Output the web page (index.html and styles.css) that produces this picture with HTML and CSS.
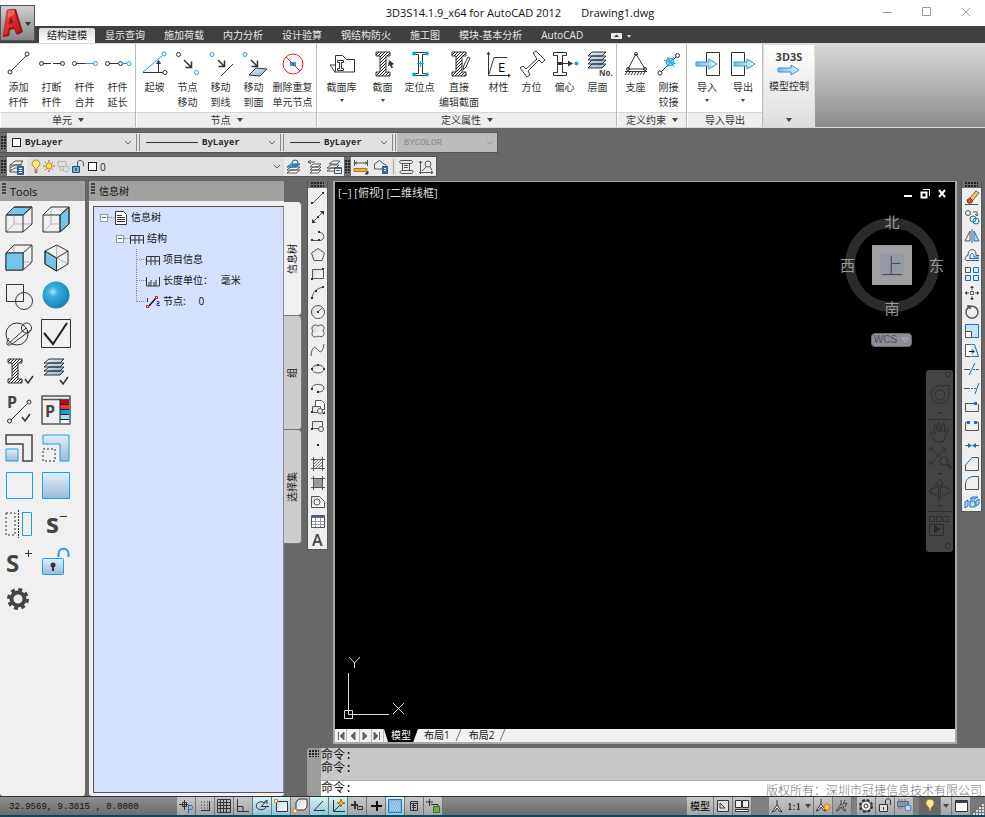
FILE: index.html
```html
<!DOCTYPE html>
<html lang="zh-CN">
<head>
<meta charset="utf-8">
<title>3D3S14.1.9_x64 for AutoCAD 2012</title>
<link rel="stylesheet" href="styles.css">
</head>
<body>
<svg class="defs" width="0" height="0" aria-hidden="true">
  <defs>
    <linearGradient id="steel" x1="0" y1="0" x2="1" y2="1"><stop offset="0" stop-color="#e4f0fb"/><stop offset="1" stop-color="#8fb0d8"/></linearGradient>
    <linearGradient id="fade" x1="0" y1="0" x2="0" y2="1"><stop offset="0" stop-color="#e2effa"/><stop offset="1" stop-color="#9db9dc"/></linearGradient>
    <linearGradient id="arrowfill" x1="0" y1="0" x2="1" y2="0"><stop offset="0" stop-color="#8fb0d8"/><stop offset="1" stop-color="#e8f6ff"/></linearGradient>
    <linearGradient id="grey" x1="0" y1="0" x2="1" y2="1"><stop offset="0" stop-color="#d4d8de"/><stop offset="1" stop-color="#ffffff"/></linearGradient>
    <linearGradient id="red" x1="0" y1="0" x2="1" y2="1"><stop offset="0" stop-color="#f0504c"/><stop offset="1" stop-color="#b80c12"/></linearGradient>
    <radialGradient id="ball" cx=".38" cy=".38" r=".6"><stop offset="0" stop-color="#b6e2fa"/><stop offset=".3" stop-color="#3aaee0"/><stop offset="1" stop-color="#1a86ba"/></radialGradient>
    <pattern id="hatch" width="3" height="3" patternUnits="userSpaceOnUse"><path d="M0 3L3 0" stroke="#222" stroke-width="1"/></pattern>
    <path id="beam" d="M0 0h14v4h-4v16h4v4H0v-4h4V4H0z"/>
    <path id="arrow" d="M0 3h13V0l8 5-8 5V7H0z"/>
    <path id="chev" d="M1 2l3 3 3-3"/>
    <g id="cube"><path class="pale" d="M10 2v17h18M10 19l-8 8"/><path d="M2 10h17v17H2zM2 10l8-8h18v17l-9 8M19 10l9-8"/></g>
  </defs>
</svg>

<header class="top">
  <div class="titlebar">
    <h1 class="title"><span>3D3S14.1.9_x64 for AutoCAD 2012</span><span>Drawing1.dwg</span></h1>
    <button class="win" aria-label="最小化"><svg width="10" height="10"><path d="M0 5.500h9"/></svg></button>
    <button class="win" aria-label="最大化"><svg width="10" height="10"><path d="M.5.500h8v8h-8z"/></svg></button>
    <button class="win" aria-label="关闭"><svg width="10" height="10"><path d="M1 1l8 8M9 1L1 9"/></svg></button>
  </div>
  <nav class="tabs">
    <a class="tab on" href="#">结构建模</a><a class="tab" href="#">显示查询</a><a class="tab" href="#">施加荷载</a><a class="tab" href="#">内力分析</a><a class="tab" href="#">设计验算</a><a class="tab" href="#">钢结构防火</a><a class="tab" href="#">施工图</a><a class="tab" href="#">模块-基本分析</a><a class="tab" href="#">AutoCAD</a>
    <button class="fold" aria-label="折叠功能区"><svg width="22" height="8"><rect x="1" y="1" width="11" height="6" rx="1" fill="#eee" stroke="none"/><path d="M4 5l2.500-2.500L9 5z" fill="#333" stroke="none"/><path d="M17 3h4l-2 3z" fill="#ddd" stroke="none"/></svg></button>
  </nav>
  <button class="app" aria-label="应用程序菜单"><svg width="32" height="33"><path d="M7 3l8-1 7 23-6 3-3-6-4 1-1 6-6 1z" fill="#8d1216" stroke="none"/><path fill-rule="evenodd" d="M6 3l7-1 7 22-5 2-2-6-5 1-1 6-5 2zM10 9l-2 8 4-1z" fill="url(#red)" stroke="#a81c20" stroke-width=".5"/><path d="M7 4l6-1 1 4-7 4z" fill="#ff8078" opacity=".6" stroke="none"/><path d="M24 15h6l-3 4z" fill="#333" stroke="none"/></svg></button>
</header>

<section class="ribbon">
  <div class="panel">
    <div class="tools-row">
      <button class="big"><svg width="28" height="28"><path d="M6 21L21 6"/><circle cx="5" cy="22" r="2"/><circle cx="22" cy="4" r="2"/></svg><span>添加<br>杆件</span></button>
      <button class="big"><svg width="28" height="28"><path d="M5 13.500h8M15 13.500h8"/><circle cx="3.500" cy="13.500" r="2"/><circle cx="24.500" cy="13.500" r="2"/></svg><span>打断<br>杆件</span></button>
      <button class="big"><svg width="28" height="28"><path d="M5 13.500h9"/><circle cx="3.500" cy="13.500" r="2"/><g class="b"><path d="M14 13.500h9"/><circle cx="24.500" cy="13.500" r="2"/></g></svg><span>杆件<br>合并</span></button>
      <button class="big"><svg width="28" height="28"><path d="M5 13.500h9"/><circle cx="3.500" cy="13.500" r="2"/><circle cx="16.500" cy="13.500" r="2"/><g class="b"><path d="M18 13.500h5"/><circle cx="25" cy="13.500" r="2"/></g></svg><span>杆件<br>延长</span></button>
    </div>
    <h2 class="cap">单元 <i class="tri"></i></h2>
  </div>
  <div class="panel">
    <div class="tools-row">
      <button class="big"><svg width="28" height="28"><path d="M2 22.500h20M17.500 22V11M15.500 13.500l2-3 2 3z"/><circle cx="24" cy="22.500" r="2"/><g class="b"><path d="M2 22L21 6"/><circle cx="23" cy="4" r="2"/></g></svg><span>起坡</span></button>
      <button class="big"><svg width="28" height="28"><circle cx="4.500" cy="4.500" r="2"/><path d="M10 10l7 7M17.500 11.500v6h-6" stroke-width="1.500"/><circle class="b" cx="22.500" cy="22.500" r="2"/></svg><span>节点<br>移动</span></button>
      <button class="big"><svg width="28" height="28"><circle class="b" cx="5" cy="4.500" r="2"/><path d="M11 10l6 6M17.500 10.500v6h-6" stroke-width="1.500"/><path d="M14 26l12-12"/></svg><span>移动<br>到线</span></button>
      <button class="big"><svg width="28" height="28"><circle class="b" cx="5" cy="4.500" r="2"/><path d="M11 10l6 6M17.500 10.500v6h-6" stroke-width="1.500"/><path d="M9 25l7-7 11 1-7 7z" fill="url(#steel)"/></svg><span>移动<br>到面</span></button>
      <button class="big w44"><svg width="28" height="28"><path d="M11 12h6v4h-6z" fill="#1ba1e2" stroke="none"/><circle cx="14" cy="14" r="10" stroke="#e8202c"/><path d="M7 7l14 14" stroke="#e8202c"/></svg><span>删除重复<br>单元节点</span></button>
    </div>
    <h2 class="cap">节点 <i class="tri"></i></h2>
  </div>
  <div class="panel wide">
    <div class="tools-row">
      <button class="big w41"><svg width="28" height="28"><path d="M2 15h5M2 15l5 7M7.500 21V5.500h7l4 4h8v12.500h-20z"/><path d="M9.500 10.500h6v2h-2v6h2v2h-6v-2h2v-6h-2z"/></svg><span>截面库</span><i class="tri small"></i></button>
      <button class="big w41"><svg width="28" height="28"><use href="#beam" x="7" y="2" fill="url(#hatch)"/><path class="k" d="M20 10l5 4-2 1 1 3-2 0-1-3-2 1z"/></svg><span>截面</span><i class="tri small"></i></button>
      <button class="big"><svg width="28" height="28"><path d="M7.500 2.500h14v2h-5v19h5v2h-14v-2h5v-19h-5z"/><path class="b" d="M11 13.500h7M14.500 11v6"/><g fill="#1ba1e2" stroke="none"><circle cx="8" cy="3.500" r="2"/><circle cx="21" cy="3.500" r="2"/><circle cx="8" cy="24.500" r="2"/><circle cx="21" cy="24.500" r="2"/></g></svg><span>定位点</span></button>
      <button class="big w46"><svg width="28" height="28"><use href="#beam" x="7" y="2" fill="url(#hatch)"/><path d="M18 20l1-5 4-8 2 1-4 9z" fill="#fff"/></svg><span>直接<br>编辑截面</span></button>
      <button class="big"><svg width="28" height="28"><path d="M3.500 3v22.500H25M4 24l5-16.500h13"/><path class="k" d="M3.500 1.500l2 3h-4zM26 25.500l-3-2v4z"/><text x="13" y="22" class="t13">E</text></svg><span>材性</span></button>
      <button class="big"><svg width="28" height="28"><path d="M15 3l3-2 9 9-3 3-3-3L10 21l2 4-3 2-7-9 3-2 3 3L19 9z"/></svg><span>方位</span></button>
      <button class="big"><svg width="28" height="28"><path d="M2.500 2.500h13v3h-4v17h4v3h-13v-3h4v-17h-4zM7 13.500h13"/><path class="k" d="M22 13.500l-5-3v6z"/><circle cx="25.500" cy="13.500" r="2" fill="#1ba1e2" stroke="none"/><path class="k" d="M7 12h4v3H7z"/></svg><span>偏心</span></button>
      <button class="big"><svg width="28" height="28"><g fill="url(#steel)"><path d="M4 18l4-4h14l-4 4zM4 14l4-4h14l-4 4zM4 10l4-4h14l-4 4zM4 6l4-4h14l-4 4z"/></g><text x="15" y="26" class="t8">No.</text></svg><span>层面</span></button>
    </div>
    <h2 class="cap">定义属性 <i class="tri"></i></h2>
  </div>
  <div class="panel">
    <div class="tools-row">
      <button class="big"><svg width="28" height="28"><path d="M14 4L6 19h17z"/><circle cx="14" cy="4" r="1.500"/><circle cx="6" cy="19" r="1.500"/><circle cx="23" cy="19" r="1.500"/><path d="M3 21.500h22M5 22l-2 3M8 22l-2 3M11 22l-2 3M14 22l-2 3M17 22l-2 3M20 22l-2 3M23 22l-2 3"/></svg><span>支座</span></button>
      <button class="big"><svg width="28" height="28"><path d="M6 22L21 7"/><circle cx="5" cy="23" r="2"/><circle cx="22.500" cy="5.500" r="2"/><circle cx="15" cy="12" r="4" fill="#8ed0f4" class="b"/><path class="b" d="M9 10l12 4M12 7l7 10M19 7l-7 10"/></svg><span>刚接<br>铰接</span></button>
    </div>
    <h2 class="cap">定义约束 <i class="tri"></i></h2>
  </div>
  <div class="panel">
    <div class="tools-row">
      <button class="big w37"><svg width="28" height="28"><path d="M13.500 2.500h13v23h-13z"/><use href="#arrow" x="3" y="9" class="b" fill="url(#arrowfill)"/></svg><span>导入</span><i class="tri small"></i></button>
      <button class="big w37"><svg width="28" height="28"><path d="M2.500 2.500h13v23h-13z"/><use href="#arrow" x="5" y="9" class="b" fill="url(#arrowfill)"/></svg><span>导出</span><i class="tri small"></i></button>
    </div>
    <h2 class="cap">导入导出</h2>
  </div>
  <button class="panel model"><b>3D3S</b><svg width="24" height="12"><use href="#arrow" x="1" y="1" class="b" fill="url(#arrowfill)"/></svg><span>模型控制</span><i class="tri"></i></button>
</section>

<div class="bar">
  <i class="grip"></i>
  <div class="combo c1"><i class="swatch"></i><select class="mono" aria-label="颜色"><option>ByLayer</option></select><svg class="chev" width="8" height="8"><use href="#chev"/></svg></div>
  <i class="split"></i>
  <div class="combo c2"><i class="rule"></i><select class="mono" aria-label="线型"><option>ByLayer</option></select><svg class="chev" width="8" height="8"><use href="#chev"/></svg></div>
  <i class="split"></i>
  <div class="combo c3"><i class="rule short"></i><select class="mono" aria-label="线宽"><option>ByLayer</option></select><svg class="chev" width="8" height="8"><use href="#chev"/></svg></div>
  <i class="split"></i>
  <div class="combo c4"><select class="mono" aria-label="打印样式" disabled><option>BYCOLOR</option></select><svg class="chev" width="8" height="8"><use href="#chev"/></svg></div>
</div>
<div class="bar">
  <i class="grip"></i>
  <button class="ic" aria-label="图层特性"><svg width="16" height="16"><path d="M1 12l5-3h5M1 9l5-3h7M1 6l5-4h8l-3 4H1v7h7" /><path d="M8.500 7.500h6v8h-6z" fill="#3f6fa8" stroke="#35557c"/><path d="M10 9.500h3M10 11.500h3M10 13.500h3" stroke="#fff"/></svg></button>
  <div class="combo c5">
    <svg width="56" height="16"><path d="M6 9C0 4 5 1 7 1s7 3 1 8v2H6z" fill="#ffe97a" stroke="#b08a20"/><path d="M5.500 12h3M6 13.500h2" stroke="#555"/><circle cx="20" cy="7" r="3" fill="#ffe14d" stroke="#c08a20"/><path d="M20 1v2M20 11v2M14 7h2M24 7h2M16 3l1 1M24 3l-1 1M16 11l1-1M24 11l-1-1" stroke="#8c6a20"/><path d="M29 2.500h8v5h-8zM31 7v4h4" stroke="#b5b5b5"/><circle cx="37" cy="10" r="3" stroke="#b5b5b5" fill="#ddd"/><path d="M43.500 7.500h7v6h-7z" fill="#6fb3dc" stroke="#234c68"/><path d="M48.500 7V4c0-4 6-3 6 1v2" stroke="#235f86"/><path d="M47 9v3" stroke="#123"/></svg>
    <i class="swatch"></i><select class="plain" aria-label="图层"><option>0</option></select><svg class="chev" width="8" height="8"><use href="#chev"/></svg>
  </div>
  <button class="ic" aria-label="置为当前"><svg width="16" height="16"><g fill="#fff"><path d="M1 14l4-3h9l-4 3zM1 11l4-3h9l-4 3z"/></g><path d="M1 8l4-3h9l-4 3z" fill="#57a9dc" stroke="#1f6c9e"/><circle cx="9" cy="4" r="3" stroke="#1f6c9e"/></svg></button>
  <button class="ic" aria-label="上一个图层"><svg width="16" height="16"><g fill="#fff"><path d="M4 14l3-3h8l-3 3zM4 11l3-3h8l-3 3zM4 8l3-3h8l-3 3z"/></g><path d="M9 3H2M5 1L2 3l3 2"/></svg></button>
  <button class="ic" aria-label="图层状态"><svg width="16" height="16"><g fill="#fff"><path d="M1 12l4-3h8l-3 3zM1 9l4-3h8l-3 3zM3 5l4-3h7l-3 3z"/></g><path d="M8.500 8.500h7v6h-7z" fill="#dfe8f3"/><path d="M9 9.500h6M10 11.500h4" stroke="#3f6fa8"/></svg></button>
  <i class="grip"></i>
  <button class="ic" aria-label="测量"><svg width="16" height="16"><path d="M1.500 1v6M14.500 1v6M2 4h12M4 2.500L2 4l2 1.500M12 2.500L14 4l-2 1.500"/><path d="M1 9.500h13v3H1z" fill="#f0b323" stroke="#b07c1c"/><path d="M15 12v3h-3z" fill="#000"/></svg></button>
  <button class="ic" aria-label="面域"><svg width="16" height="16"><path d="M1.500 10V5l5-3.500L11 5l2 1v3M2 10h7" fill="#eee"/><path d="M9.500 7.500h5v7h-5z" fill="#3f6fa8" stroke="#35557c"/><path d="M11 9.500h2M11 11.500h2" stroke="#fff"/></svg></button>
  <i class="line"></i>
  <button class="ic" aria-label="列表"><svg width="16" height="16"><path d="M3 1.500h10c2 0 2 3 0 3H4c-3 0-3-3-1-3zM4.500 5v7M11.500 5v6M6 6.500h4M6 8.500h4M4 11.500h10c2 0 1 3-1 3H4c-3 0-2-3 0-3z"/></svg></button>
  <button class="ic" aria-label="定位点"><svg width="16" height="16"><path d="M2.500 15V2M1 4l1.500-2L4 4M1 13.500h14M13 12l2 1.500L13 15M4 12l5-5"/><circle cx="10" cy="5" r="3"/><path d="M12 8l2 3"/></svg></button>
</div>

<main class="work">
  <aside class="dock toolbox">
    <h2 class="dock-head"><i class="dots"></i>Tools</h2>
    <div class="grid">
      <button aria-label="俯视"><svg width="30" height="30"><path d="M2 10l8-8h18l-9 8z" fill="#6fc7f0"/><use href="#cube"/></svg></button>
      <button aria-label="右视"><svg width="30" height="30"><path d="M19 10l9-8v17l-9 8z" fill="#6fc7f0"/><use href="#cube"/></svg></button>
      <button aria-label="前视"><svg width="30" height="30"><use href="#cube"/><path d="M2 10h17v17H2z" fill="#6fc7f0"/></svg></button>
      <button aria-label="轴测"><svg width="30" height="30"><path d="M4 8l11.500 7v13L4 21z" fill="#6fc7f0"/><path class="pale" d="M4 21l11.500-6L27 21M15.500 2v13"/><path d="M15.500 2L27 8v13l-11.500 7L4 21V8zM4 8l11.500 7L27 8M15.500 15v13"/></svg></button>
      <button aria-label="相交"><svg width="30" height="30"><path d="M2.500 3.500h17v17h-17z"/><circle cx="20" cy="20" r="8.500"/></svg></button>
      <button aria-label="渲染"><svg width="30" height="30"><circle cx="15" cy="14" r="13.500" fill="url(#ball)" stroke="none"/></svg></button>
      <button aria-label="旋转"><svg width="30" height="30"><circle cx="13" cy="15" r="11"/><circle cx="22.500" cy="9" r="5"/><path d="M3 26L22 9M5 19c-4 5-2 9 3 6L27 11"/></svg></button>
      <button aria-label="确认"><svg width="30" height="30"><path d="M.5.500h29v28H.5z"/><path d="M3 14l9 11L26 4" stroke="#222" stroke-width="2"/></svg></button>
      <button aria-label="截面显示"><svg width="30" height="30"><use href="#beam" x="4" y="2" fill="url(#hatch)"/><path d="M21 22l3 4 5-7" stroke-width="1.500"/></svg></button>
      <button aria-label="层面显示"><svg width="30" height="30"><g fill="url(#steel)"><path d="M3 18l5-4h15l-4 4zM3 14l5-4h15l-4 4zM3 10l5-4h15l-4 4zM3 6l5-4h15l-4 4z"/></g><path d="M19 23l3 4 5-7" stroke-width="1.500"/></svg></button>
      <button aria-label="杆件属性"><svg width="30" height="30"><text x="3" y="13" class="t16">P</text><path d="M7 25L24 8"/><circle cx="5.500" cy="26" r="2"/><circle cx="25" cy="7" r="2"/><path d="M18 22l3 4 5-7" stroke-width="1.500"/></svg></button>
      <button aria-label="属性颜色"><svg width="30" height="30"><path d="M1 1h28v28H1zM1 4.500h28" stroke="#555" stroke-width="1.500"/><g stroke="none"><path d="M19 5h9v4h-9z" fill="#c2001a"/><path d="M19 10h9v4h-9z" fill="#ef3434"/><path d="M19 15h9v4h-9z" fill="#12a0e4"/><path d="M19 20h9v4h-9z" fill="#a6dcf6"/><path d="M19 25h9v3h-9z" fill="#fff"/></g><path d="M19 4v24M19 9.500h9M19 14.500h9M19 19.500h9M19 24.500h9" stroke="#222"/><text x="4" y="22" class="t16">P</text></svg></button>
      <button aria-label="内部"><svg width="30" height="30"><path d="M2 2h26v26h-9V11H2z" stroke="#444" stroke-width="1.500"/><path class="b" d="M2 16h12v12H2z" fill="url(#fade)"/></svg></button>
      <button aria-label="外部"><svg width="30" height="30"><path class="b" d="M2 2h26v26h-9V11H2z" fill="url(#fade)"/><path d="M2 16h12v12H2z" stroke-dasharray="2 2"/></svg></button>
      <button aria-label="空框"><svg width="30" height="30"><path class="b" d="M2.500 1.500h26v26h-26z"/></svg></button>
      <button aria-label="实框"><svg width="30" height="30"><path class="b" d="M1.500 1.500h27v26h-27z" fill="url(#fade)"/></svg></button>
      <button aria-label="镜像"><svg width="30" height="30"><path d="M2 4h9v22H2z" stroke-dasharray="2 2"/><path d="M14.500 1v28" stroke-dasharray="2 1"/><path class="b" d="M18.500 3.500h9v23h-9z"/></svg></button>
      <button aria-label="减选"><svg width="30" height="30"><text x="5" y="24" class="t26">s</text><path d="M19 7.500h7"/></svg></button>
      <button aria-label="加选"><svg width="30" height="30"><text x="2" y="25" class="t24">S</text><path d="M21 6.500h7M24.500 3v7"/></svg></button>
      <button aria-label="解锁"><svg width="30" height="30"><rect class="b" x="1.500" y="11.500" width="21" height="16" rx="1" fill="url(#fade)"/><path class="b" d="M17.500 10V7c0-7 10-7 10 0v3" stroke-width="2"/><circle cx="12" cy="18" r="2.500" fill="#333" stroke="none"/><path d="M12 19v5" stroke="#333" stroke-width="2"/></svg></button>
      <button aria-label="设置"><svg width="30" height="30"><circle cx="14" cy="14" r="6.500" stroke="#444" stroke-width="4"/><circle cx="14" cy="14" r="9.500" stroke="#444" stroke-width="3" stroke-dasharray="4 3.460"/></svg></button>
    </div>
  </aside>

  <aside class="info">
    <div class="dock">
      <h2 class="dock-head"><i class="dots"></i>信息树</h2>
      <ul class="tree">
        <li><i class="pm"></i><i class="dash"></i><svg width="14" height="16"><path d="M1.500 1.500h8l3 3v10h-11z" fill="#fff"/><path d="M3 5.500h5M3 7.500h8M3 9.500h8M3 11.500h8"/></svg><span>信息树</span></li>
        <li class="l2"><i class="pm"></i><i class="dash"></i><svg width="14" height="16"><path d="M.5 13V4.500h13V13M5 4v9M9 4v9M1 9h12"/></svg><span>结构</span></li>
        <li class="l3"><svg class="twig" width="10" height="21"><path d="M.5 0v21M1 10.500h9"/></svg><svg width="14" height="16"><path d="M.5 13V4.500h13V13M5 4v9M9 4v9M1 9h12"/></svg><span>项目信息</span></li>
        <li class="l3"><svg class="twig" width="10" height="21"><path d="M.5 0v21M1 10.500h9"/></svg><svg width="14" height="16"><path d="M.5 4v9h13V4M3 9v4M5 7v6M8 9v4M10 7v6"/></svg><span>长度单位：&nbsp;&nbsp; 毫米</span></li>
        <li class="l3"><svg class="twig" width="10" height="21"><path d="M.5 0v11M1 10.500h9"/></svg><svg width="14" height="16"><path d="M3 12L10 4" stroke="#111" stroke-width="1.500"/><path d="M.5 11.500h2v2h-2zM9.500 2.500h2v2h-2z" stroke="#f00" fill="#fff"/><path d="M1.500 4v4M11 7.500h2v2h-2v2h3" stroke="#2a2ae0"/></svg><span>节点:&nbsp;&nbsp;&nbsp;&nbsp; 0</span></li>
      </ul>
    </div>
    <div class="side"><button class="on"><span>信息树</span></button><button><span>组</span></button><button><span>选择集</span></button></div>
  </aside>

  <div class="right">
    <div class="stage">
      <div class="strip">
        <i class="grip h"></i>
        <button aria-label="直线"><svg width="16" height="16"><path d="M3 13L13 3"/><path class="k" d="M1 12h2v2H1zM12 2h2v2h-2z"/></svg></button>
        <button aria-label="构造线"><svg width="16" height="16"><path d="M2 14L14 2"/><path class="k" d="M2 10v4h4zM10 2h4v4zM7 7h2v2H7z"/></svg></button>
        <button aria-label="多段线"><svg width="16" height="16"><path d="M2 12.500h8c5 0 5-8 0-8H8"/><path class="k" d="M1 11h2v2H1zM8 11h2v2H8zM8 3h2v2H8z"/></svg></button>
        <button aria-label="多边形"><svg width="16" height="16"><path d="M8 1.500L14.500 6 12 13.500H4L1.500 6z" fill="url(#grey)"/></svg></button>
        <button aria-label="矩形"><svg width="16" height="16"><path d="M2.500 3.500h11v9h-11z" fill="url(#grey)"/><path class="k" d="M1 12h2v2H1zM12 2h2v2h-2z"/></svg></button>
        <button aria-label="圆弧"><svg width="16" height="16"><path d="M2 14C2 8 6 3 14 2"/><path class="k" d="M1 12h2v2H1zM12 1h2v2h-2zM5 5h2v2H5z"/></svg></button>
        <button aria-label="圆"><svg width="16" height="16"><circle cx="8" cy="8" r="6.500" fill="url(#grey)"/><path d="M8 8l4-4"/><path class="k" d="M7 7h2v2H7z"/></svg></button>
        <button aria-label="修订云线"><svg width="16" height="16"><path d="M3 8c-3-4 1-8 5-5 4-3 8 1 5 5 3 4-1 7-5 5-4 3-8-1-5-5z" fill="url(#grey)"/></svg></button>
        <button aria-label="样条曲线"><svg width="16" height="16"><path d="M1 14C2 4 5 4 8 8s5 1 6-6"/></svg></button>
        <button aria-label="椭圆"><svg width="16" height="16"><ellipse cx="8" cy="8" rx="6" ry="4" fill="url(#grey)"/><path class="k" d="M1 7h2v2H1zM7 3h2v2H7zM13 7h2v2h-2z"/></svg></button>
        <button aria-label="椭圆弧"><svg width="16" height="16"><path d="M2 9c-1-6 12-6 12-1 0 3-3 4-6 4"/><path class="k" d="M1 8h2v2H1zM7 11h2v2H7z"/></svg></button>
        <button aria-label="插入块"><svg width="16" height="16"><path d="M5.500 1.500h6l3 3v6h-9z" fill="#fff"/><path d="M2.500 7.500h8v6h-8z" fill="url(#grey)"/><circle cx="10" cy="12" r="2.500" fill="#eee"/><path class="k" d="M1 12h2v2H1zM15 12v3h-3z"/></svg></button>
        <button aria-label="创建块"><svg width="16" height="16"><path d="M2.500 3.500h10v7h-10z" fill="url(#grey)"/><circle cx="11" cy="11" r="2.500" fill="#eee"/><path class="k" d="M1 10h2v2H1z"/></svg></button>
        <button aria-label="点"><svg width="16" height="16"><path class="k" d="M7 7h2v2H7z"/></svg></button>
        <button aria-label="图案填充"><svg width="16" height="16"><path d="M3.500 1v14M12.500 1v14M1 3.500h14M1 12.500h14"/><path d="M4 4h8v8H4z" fill="url(#hatch)" stroke="none" opacity=".6"/></svg></button>
        <button aria-label="渐变色"><svg width="16" height="16"><path d="M4 4h8v8H4z" fill="#999" stroke="none"/><path d="M3.500 1v14M12.500 1v14M1 3.500h14M1 12.500h14"/></svg></button>
        <button aria-label="面域"><svg width="16" height="16"><path d="M1.500 2.500h8l5 5v6h-13z" fill="url(#grey)"/><circle cx="7" cy="8" r="3" fill="#fff"/></svg></button>
        <button aria-label="表格"><svg width="16" height="16"><path d="M1.500 2.500h13v12h-13z" fill="#fff"/><path d="M1 3h14v2H1z" fill="#4a6a94" stroke="none"/><path d="M5.500 5v9M10.500 5v9M2 8.500h12M2 11.500h12" stroke="#999"/></svg></button>
        <button aria-label="多行文字"><svg width="16" height="16"><text x="2" y="14" class="tA">A</text></svg></button>
      </div>

      <section class="view">
        <div class="model-space">
          <p class="vp">[−] [俯视] [二维线框]</p>
          <div class="mdi"><button aria-label="最小化"><svg width="10" height="10"><path d="M1 7h8" stroke-width="2"/></svg></button><button aria-label="还原"><svg width="10" height="10"><path d="M1.500 3.500h5v5h-5z" stroke-width="2"/><path d="M3 .5h6.500V7"/></svg></button><button aria-label="关闭"><svg width="10" height="10"><path d="M2 1l6 7M8 1L2 8" stroke-width="2"/></svg></button></div>
          <div class="compass">
            <svg width="104" height="104"><circle cx="52" cy="52" r="42" stroke="#2b2b2b" stroke-width="10"/></svg>
            <b class="n">北</b><b class="s">南</b><b class="w">西</b><b class="e">东</b>
            <button class="face"><span>上</span></button>
          </div>
          <button class="wcs">WCS <svg width="8" height="6"><path d="M1 1h6L4 5z"/></svg></button>
          <div class="navbar"><svg width="27" height="182"><circle cx="22" cy="4" r="2.500"/><path d="M2 49.500h23M2 141.500h23"/><path d="M14 15.500h9v10a9 9 0 1 1-9-10z"/><circle cx="14" cy="25" r="5"/><path class="nf" d="M11 42h5l-2.500 2zM11 103h5l-2.500 2zM11 135h5l-2.500 2zM8 155l7 4-7 4z"/><path d="M8 70l-4-7c0-2 2-2 3 0l2 2-1-9c0-2 2-2 2 0l2 6V54c0-2 2-2 2 0l1 8 2-7c0-2 2-2 2 0l-1 8 3-5c1-1 2 0 1 2l-3 8-2 4h-7z"/><path d="M4 78l16 16M20 78L4 94M4 82v-4h4M16 78h4v4M4 90v4h4"/><circle cx="18" cy="91" r="4" fill="#444"/><path d="M21 94l4 4" stroke-width="2"/><path d="M12.500 130v-15h-3l4-6 4 6h-3v15zM12 117c-11 2-11 7-1 8M15 117c12 1 12 7 2 8M6 118l-3 3 4 2"/><path d="M3.500 146.500h5v5h-5zM10.500 146.500h5v5h-5zM17.500 146.500h5v5h-5zM3.500 154.500h14v11h-14z"/><circle cx="22" cy="176" r="2.500"/></svg></div>
          <svg class="ucs" width="64" height="66"><path d="M5.500 53V19M9 60.500h37M1.500 56.500h8v8h-8zM5 60.500h4M5.500 53v7M6 3l5.500 6L17 3M11.500 9v5M50 49l11 11M61 49L50 60"/></svg>
        </div>
        <div class="sheets">
          <div class="steps"><button aria-label="首个"><svg width="10" height="10"><path d="M2.500 1v8M8 1L4 5l4 4z"/></svg></button><button aria-label="上一个"><svg width="10" height="10"><path d="M7 1L3 5l4 4z"/></svg></button><button aria-label="下一个"><svg width="10" height="10"><path d="M3 1l4 4-4 4z"/></svg></button><button aria-label="末个"><svg width="10" height="10"><path d="M7.500 1v8M2 1l4 4-4 4z"/></svg></button></div>
          <a class="sheet on" href="#">模型</a><a class="sheet" href="#">布局1</a><svg width="8" height="12"><path d="M1 12L6 0"/></svg><a class="sheet" href="#">布局2</a><svg width="8" height="12"><path d="M1 12L6 0"/></svg>
        </div>
      </section>

      <div class="strip mod">
        <i class="grip h"></i>
        <button aria-label="删除"><svg width="16" height="16"><path d="M1 14.500h13" /><path d="M5 9l7-8 3 2-7 8z" fill="#f1c27a" stroke="#7a5a2c"/><path d="M3 10l3-2 3 3-2 2H4z" fill="#df5128" stroke="#8a2c10"/></svg></button>
        <button aria-label="复制"><svg width="16" height="16"><circle cx="4" cy="4" r="2.500"/><path d="M9 3h4v3M11 5l2 2 1-2"/><g class="m"><circle cx="9" cy="10" r="3"/><circle cx="12" cy="12" r="3"/></g></svg></button>
        <button aria-label="镜像"><svg width="16" height="16"><path d="M6 3v10H1zM8 1v14" /><path class="m" d="M10 3v10h5z" fill="#a9d7f5"/></svg></button>
        <button aria-label="偏移"><svg width="16" height="16"><path d="M15 13.500H3c-3 0-2-5 1-5 0-8 9-8 8 0h3"/><path class="m" d="M15 11.500H5M6 11c0-6 4-6 4-1h5"/></svg></button>
        <button aria-label="阵列"><svg width="16" height="16"><path d="M1.500 1.500h5v5h-5z"/><path class="m" fill="#d6edfb" d="M9.500 1.500h5v5h-5zM1.500 9.500h5v5h-5zM9.500 9.500h5v5h-5z"/></svg></button>
        <button aria-label="移动"><svg width="16" height="16"><path d="M8 1v4M8 11v4M1 8h4M11 8h4M6.500 6.500h3v3h-3z"/><path class="k" d="M6 3l2-2 2 2zM6 13l2 2 2-2zM3 6L1 8l2 2zM13 6l2 2-2 2z"/></svg></button>
        <button aria-label="旋转"><svg width="16" height="16"><path d="M5 3a6 6 0 1 0 6 0M5 3c2-1 4-1 6 0M3 2h3v3" stroke-width="1.500"/></svg></button>
        <button aria-label="缩放"><svg width="16" height="16"><path class="m" fill="#c6e5f8" d="M1.500 1.500h13v13h-13z"/><path d="M1.500 8.500h6v6h-6z" fill="#fff"/></svg></button>
        <button aria-label="拉伸"><svg width="16" height="16"><path d="M7 14.500H1.500v-12H7" fill="#fff"/><path class="m" d="M7.500 2.500h3l4 12h-7" fill="#d6edfb"/><path d="M5 9.500h5M8 7.500l2 2-2 2" stroke="#111"/></svg></button>
        <button aria-label="修剪"><svg width="16" height="16"><path d="M0 8.500h6"/><path class="m" d="M5 14L11 2M9 8.500h2M12 8.500h3"/></svg></button>
        <button aria-label="延伸"><svg width="16" height="16"><path d="M0 8.500h6"/><path class="m" d="M7 8.500h2M10 8.500h2M11 14l4-11"/></svg></button>
        <button aria-label="打断于点"><svg width="16" height="16"><path d="M10 4.500H1.500v8h13V5"/><path d="M10 3h3v3h-3z" fill="#1670c4" stroke="none"/></svg></button>
        <button aria-label="打断"><svg width="16" height="16"><path d="M3 4.500H1.500v8h13v-8H13"/><path d="M3 3h3v3H3zM10 3h3v3h-3z" fill="#1670c4" stroke="none"/></svg></button>
        <button aria-label="合并"><svg width="16" height="16"><path d="M1 8.500h4M11 8.500h4"/><path d="M4 6l4 2.500L4 11zM12 6L8 8.500l4 2.500z" fill="#1670c4" stroke="none"/></svg></button>
        <button aria-label="倒角"><svg width="16" height="16"><path d="M8 1.500h6.500v13h-13V9"/><path class="m" d="M1.500 9L8 1.500"/></svg></button>
        <button aria-label="圆角"><svg width="16" height="16"><path d="M9 1.500h5.500v13h-13V9"/><path class="m" d="M1.500 9C2 4 5 2 9 1.500"/></svg></button>
        <button aria-label="分解"><svg width="16" height="16"><g class="m" fill="#bfe0f6"><path d="M1 8l3-2v6l-3 2zM6 7h5v6H6zM6 5l2-2h6l-3 2zM12 7l3-2v5l-3 2z"/></g></svg></button>
      </div>
    </div>

    <section class="command">
      <i class="cmd-grip"></i>
      <div class="cmd-body">
        <div class="log"><p>命令:</p><p>命令:</p></div>
        <div class="entry"><label for="cmd">命令:</label><input id="cmd" type="text"><span class="copy">版权所有：深圳市冠捷信息技术有限公司</span></div>
      </div>
    </section>
  </div>
</main>

<footer class="status">
  <span class="coords mono">32.9569, 9.3815 , 0.0000</span>
  <div class="toggles">
    <button aria-label="推断约束"><svg width="16" height="16"><path d="M1 6.500h9M6.500 2v10M4.500 4.500h4v4h-4z"/><path d="M10.500 7v8M11 7.500h2c2 0 2 4 0 4h-2" stroke="#1670c4"/></svg></button>
    <button aria-label="捕捉"><svg width="16" height="16"><path d="M4 4h1M7 4h1M10 4h1M4 7h1M7 7h1M10 7h1M4 10h1M7 10h1M10 10h1M4 12.500h8M12.500 3v10"/></svg></button>
    <button aria-label="栅格"><svg width="16" height="16"><path d="M1.500 1.500h13v13h-13zM4.500 1v14M7.500 1v14M10.500 1v14M1 4.500h14M1 7.500h14M1 10.500h14"/></svg></button>
    <button aria-label="正交"><svg width="16" height="16"><path d="M2.500 1v12.500H14M3 8.500h5V13"/></svg></button>
    <button class="on" aria-label="极轴"><svg width="16" height="16"><path d="M12 9a5 4 0 1 1-3-5M7 8.500h8M7 9l6-7M9 5l4-3v4"/></svg></button>
    <button class="on" aria-label="对象捕捉"><svg width="16" height="16"><path d="M3.500 3.500h11v10h-11z" fill="url(#grey)"/><path d="M1.500 1.500h3v3h-3z" fill="#fff" stroke="#ef7b2a"/></svg></button>
    <button aria-label="三维捕捉"><svg width="16" height="16"><path d="M4 4l3-3h8v8l-3 3H4z" fill="url(#grey)"/><circle cx="3" cy="13" r="2" fill="#fff" stroke="#ef7b2a"/></svg></button>
    <button class="on" aria-label="对象追踪"><svg width="16" height="16"><path d="M12 3L3 12.500h11"/></svg></button>
    <button class="on" aria-label="动态坐标"><svg width="16" height="16"><path d="M3.500 2v11.500H15M4 13l6-6"/><path d="M11 1l1 3 3 1-3 1-1 3-1-3-3-1 3-1z" fill="#ffb52e" stroke="#c46c0c"/></svg></button>
    <button aria-label="动态输入"><svg width="16" height="16"><path d="M2 7h7M6 3v8" stroke-width="2"/><path d="M8.500 8.500h5v3h-5z"/></svg></button>
    <button aria-label="线宽"><svg width="16" height="16"><path d="M3 8h11M9 3v10" stroke="#111" stroke-width="2"/></svg></button>
    <button class="on" aria-label="透明度"><svg width="16" height="16"><path d="M1.500 1.500h13v13h-13z" fill="#7cb4e2" stroke="#2d75b8"/><path d="M3 4h10M4 6h10M3 8h10M4 10h10M3 12h10" stroke="#d9ecfa" stroke-dasharray="1 1"/></svg></button>
    <button aria-label="快捷特性"><svg width="16" height="16"><path d="M4.500 3.500h7v9h-7zM5 5.500h6M6 7.500h4M6 9.500h4M7.500 6v6"/></svg></button>
    <button aria-label="选择循环"><svg width="16" height="16"><path d="M1 4h7M4.500 1v7M6 6.500h7v2"/><path d="M8.500 8.500h6v6h-6z" fill="#6fae45" stroke="#3c6c1e"/></svg></button>
  </div>
  <div class="toggles end">
    <button class="word">模型</button>
    <button aria-label="布局"><svg width="16" height="16"><path d="M2.500 2.500h11v11h-11z" fill="#ddd"/><path d="M5 5l5 5H5z"/></svg></button>
    <button aria-label="快速查看"><svg width="16" height="16"><path d="M1.500 2.500h6v7h-6zM8.500 2.500h6v7h-6zM1.500 11.500h13v2h-13z" fill="#eee"/></svg></button>
    <i class="gap"></i>
    <button class="scale" aria-label="注释比例"><svg width="12" height="14"><path d="M6 1v5L1 13l3-1 2-3 2 3 3 1-5-7" fill="#eee"/></svg><span>1:1</span><i class="tri"></i></button>
    <button aria-label="注释可见"><svg width="16" height="16"><path d="M6 1v5L1 13l3-1 2-3 2 3 3 1-5-7" fill="#eee"/><circle cx="12" cy="9" r="3" fill="#ffc14d" stroke="#d8841c"/></svg></button>
    <button class="dim" aria-label="自动缩放"><svg width="16" height="16"><path d="M7 2v4L2 13l3-1 2-3 2 3 3 1-5-7M11 2l-2 4 4-1-2 4"/></svg></button>
    <i class="gap slim"></i>
    <button aria-label="工作空间"><svg width="16" height="16"><circle cx="8" cy="8" r="6" stroke-width="2" stroke-dasharray="3 1.700"/><circle cx="8" cy="8" r="5" fill="#eee"/><circle cx="8" cy="8" r="2"/></svg></button>
    <button aria-label="锁定"><svg width="16" height="16"><path d="M2.500 6.500h8v7h-8z" fill="#ddd"/><path d="M8.500 6V3c0-3 5-3 5 0v4M6.500 9v3"/></svg></button>
    <button aria-label="硬件加速"><svg width="16" height="16"><path d="M1.500 3.500h11v5h-11zM3 1v2M6 1v2M9 1v2M3 9v2M6 9v2" stroke="#586c84" fill="#8496ac"/><circle cx="12" cy="10" r="3" fill="#b9dcf6" stroke="#3f7cb4"/></svg></button>
    <i class="gap slim"></i>
    <button class="lamp" aria-label="隔离对象"><svg width="16" height="16"><path d="M7 10C1 5 5 1 8 1s7 4 1 9v3H7z" fill="#ffeb8a" stroke="#8c7426"/></svg></button>
    <button class="more" aria-label="状态栏菜单"><i class="tri"></i></button>
    <button aria-label="全屏"><svg width="16" height="16"><path d="M2.500 2.500h12v11h-12z" fill="#fff"/><path d="M2 3h13v2H2z" fill="#345" stroke="none"/></svg></button>
    <svg class="size" width="12" height="12"><path d="M9 2h2M6 5h2M9 5h2M3 8h2M6 8h2M9 8h2M0 11h2M3 11h2M6 11h2M9 11h2"/></svg>
  </div>
</footer>
</body>
</html>
```
FILE: styles.css
```css
* { box-sizing: border-box; }

body {
  margin: 0;
  min-height: 100vh;
  display: flex;
  flex-direction: column;
  background: #686868;
  color: #333;
  font: 10px/15px "Open Sans", "Noto Sans CJK SC", sans-serif;
}

h1, h2, p, ul { margin: 0; padding: 0; font-size: inherit; font-weight: normal; }
ul { list-style: none; }
i { font-style: normal; display: block; flex: none; }
a { color: inherit; text-decoration: none; }
button { margin: 0; padding: 0; border: 0; background: none; color: inherit; font: inherit; }
svg { display: block; flex: none; fill: none; stroke: #333; overflow: visible; }
svg text { stroke: none; fill: #444; font-family: "Open Sans", sans-serif; font-weight: bold; line-height: 1; }
.defs { position: absolute; }
.b { stroke: #1ba1e2; }
.m { stroke: #1670c4; }
.k { fill: #333; stroke: none; }
.pale { stroke: #b4b4b4; }
svg .t8 { font-size: 8px; }
svg .t13 { font-size: 13px; font-weight: normal; fill: #000; }
svg .t16 { font-size: 16px; }
svg .t24 { font-size: 24px; }
svg .t26 { font-size: 26px; }
svg .tA { font-size: 16px; font-weight: 600; }
.mono { font-family: "Liberation Mono", monospace; font-size: 9px; }

.tri { border: 3px solid transparent; border-top: 4px solid #444; border-bottom: 0; }
.tri.small { border-width: 3px 2px 0; margin-top: 2px; }

/* Title bar and ribbon tabs */
.top { position: relative; }
.titlebar { height: 26px; display: flex; background: #fff; }
.title { flex: 1; display: flex; justify-content: center; gap: 20px; padding-left: 172px; font-size: 11px; line-height: 25px; color: #111; }
.win { width: 39px; height: 24px; display: grid; place-items: center; }
.win svg { stroke: #999; }
.tabs { height: 17px; padding-left: 39px; display: flex; align-items: flex-end; gap: 1px; background: #404040; color: #e8e8e8; }
.tab { padding: 0 9px; line-height: 15px; height: 15px; }
.tab.on { padding: 0 8px; background: linear-gradient(#dcdcdc, #fff); color: #222; border-radius: 2px 2px 0 0; }
.fold { margin-left: 17px; height: 15px; }
.app { position: absolute; left: 0; top: 5px; width: 35px; height: 36px; border: 1px solid #555; background: linear-gradient(#d0d0d0, #a8a8a8 50%, #888); }

.ribbon { display: flex; padding-top: 1px; background: linear-gradient(#dadada, #8c8c8c); border-bottom: 1px solid #d8d8d8; }
.panel { display: flex; flex-direction: column; background: #fff; border-right: 1px solid #bbb; }
.panel .tools-row { flex: 1; display: flex; min-height: 68px; padding: 0 1px 0 2px; }
.panel.wide .tools-row { padding: 0 2px 0 4px; }
.cap { display: flex; align-items: center; justify-content: center; gap: 6px; height: 15px; background: #eee; border-top: 1px solid #d4d4d4; border-left: 1px solid #fff; }
.big { width: 33px; padding-top: 6px; display: flex; flex-direction: column; align-items: center; gap: 2px; white-space: nowrap; }
.big.w37 { width: 36px; }
.big.w41 { width: 41px; }
.big.w44 { width: 45px; }
.big.w46 { width: 46px; }
.panel.model { width: 52px; align-items: center; padding: 5px 0 4px; border: 1px solid #ddd; background: linear-gradient(#fff, #dedede); white-space: nowrap; }
.model b { font-size: 11px; line-height: 14px; color: #444; }
.model span { margin-top: 3px; }
.model .tri { margin-top: auto; }

/* Property toolbars */
.bar { margin-top: 5px; height: 19px; display: flex; align-items: stretch; align-self: flex-start; background: #e4e4e4; outline: 1px solid #555; }
.grip { width: 7px; border: solid #6e6e6e; border-width: 3px 1px; background: radial-gradient(circle at 1px 1px, #222 1px, transparent 1px) 0 0 / 3px 3px #6e6e6e; }
.grip.h { width: auto; height: 7px; border-width: 1px 3px 0; }
.combo { display: flex; align-items: center; padding: 0 3px 0 5px; gap: 4px; background: #e0e0e0; }
.combo select { flex: 1; min-width: 0; height: 17px; padding: 0; border: 0; background: none; appearance: none; color: #222; opacity: 1; }
.combo select.mono { font-weight: bold; }
.combo select.plain { font-family: "Open Sans", sans-serif; font-size: 10px; }
.chev { stroke: #666; }
.combo select:disabled { color: #888; font-weight: normal; }
.c4 .chev { stroke: #999; }
.c1 { width: 128px; }
.c2 { width: 138px; }
.c3 { width: 106px; }
.bar .c4 { width: 100px; padding-left: 7px; background: #bcbcbc; }
.bar .c5 { width: 257px; padding-left: 2px; gap: 3px; }
.swatch { width: 9px; height: 9px; background: #fff; border: 1px solid #222; }
.rule { width: 52px; height: 1px; background: #333; }
.rule.short { width: 30px; }
.split { width: 4px; margin: 1px; border: solid #888; border-width: 0 1px; }
.ic { width: 20px; display: grid; place-items: center; background: #eaeaea; }
.line { width: 1px; margin: 2px 2px; background: #aaa; }
.ic svg { stroke: #555; }

/* Work area */
.work { flex: 1; display: flex; align-items: stretch; margin-top: 5px; }
.dock { display: flex; flex-direction: column; background: #f0f0f0; border-radius: 3px; }
.dock-head { height: 20px; display: flex; align-items: center; gap: 4px; padding-left: 2px; color: #111; background: #a0a0a0; border-radius: 3px 3px 0 0; }
.toolbox .dock-head { font-size: 11px; }
.dots { width: 4px; height: 12px; background: radial-gradient(circle at 1px 1px, #444 1px, transparent 1px) 0 0 / 2px 3px; margin-bottom: 4px; }
.toolbox { width: 85px; margin-right: 4px; }
.grid { display: grid; grid-template-columns: 37px 38px; grid-auto-rows: 38px; }
.grid button { display: grid; place-items: center; }

.info { display: flex; width: 213px; }
.info .dock { flex: 1; }
.tree { flex: 1; margin: 5px 0 3px 4px; border: 1px solid #555; border-right-color: #889; background: #d5e1ff; color: #111; }
.tree li { display: flex; align-items: center; height: 21px; padding-left: 6px; }
.tree .l2 { padding-left: 22px; }
.tree .l3 { padding-left: 42px; }
.tree span { margin-left: 3px; white-space: pre; }
.pm { width: 8px; height: 8px; border: 1px solid #999; background: linear-gradient(#46a, #46a) center / 4px 1px no-repeat #fff; }
.dash { width: 6px; border-top: 1px dotted #888; }
.twig { stroke: #888; stroke-dasharray: 1 1; }
.side { width: 18px; padding-top: 21px; display: flex; flex-direction: column; }
.side button { height: 114px; display: grid; place-items: center; background: #ccc; color: #111; border: 1px solid #777; border-width: 0 1px 1px 0; border-radius: 0 4px 4px 0; }
.side .on { background: #f0f0f0; }
.side span { writing-mode: vertical-rl; text-orientation: sideways; transform: rotate(180deg); }

.right { flex: 1; min-width: 0; margin-left: 5px; display: flex; flex-direction: column; gap: 4px; }
.stage { flex: 1; display: flex; align-items: flex-start; }
.strip { width: 21px; flex: none; display: flex; flex-direction: column; background: #eee; border: 1px solid #555; border-top: 0; }
.strip svg { stroke: #555; }
.strip .m { stroke: #1670c4; }
.strip button { height: 19px; display: grid; place-items: center; }
.strip.mod { margin-right: 3px; }

.view { flex: 1; align-self: stretch; margin: 0 4px 0 5px; display: flex; flex-direction: column; border: 1px solid #aaa; border-width: 1px 2px 2px; }
.model-space { position: relative; flex: 1; background: #000; color: #ddd; }
.vp { padding: 3px 3px; font-size: 11px; }
.mdi { position: absolute; right: 8px; top: 7px; display: flex; gap: 7px; }
.mdi svg { stroke: #fff; }
.compass { position: absolute; right: 11px; top: 31px; width: 104px; height: 104px; display: grid; place-items: center; color: #9a9a9a; font-size: 15px; line-height: 18px; }
.compass > svg { grid-area: 1 / 1; }
.compass b { position: absolute; font-weight: normal; }
.n { top: 0; }
.s { bottom: 0; }
.w { left: 0; }
.e { right: 0; }
.face { grid-area: 1 / 1; width: 40px; height: 40px; display: grid; place-items: center; background: #a0a0a0; color: #484c54; font-size: 22px; font-weight: 300; }
.face span { width: 24px; height: 24px; line-height: 24px; background: #9499a3; }
.wcs { position: absolute; right: 43px; top: 151px; width: 41px; height: 14px; display: flex; align-items: center; justify-content: center; gap: 4px; border-radius: 4px; border: 1px solid #707078; background: #8e8e98; color: #505058; font: 10px/12px "Liberation Sans", sans-serif; }
.wcs svg { stroke: #b0b0b8; }
.navbar { position: absolute; right: 2px; top: 188px; border-radius: 3px; background: #444; }
.navbar svg { stroke: #2e2e2e; }
.nf { fill: #2a2a2a; stroke: none; }
.ucs { position: absolute; left: 8px; bottom: 9px; stroke: #ddd; }

.sheets { height: 13px; display: flex; align-items: stretch; background: #f2f2f2; color: #111; }
.sheets > svg { stroke: #777; }
.steps { display: flex; width: 49px; }
.steps button { flex: 1; display: grid; place-items: center; border-right: 1px solid #bbb; }
.steps svg { stroke: #666; }
.steps path { fill: #666; }
.sheet { line-height: 13px; padding: 0 5px 0 6px; }
.sheet.on { padding: 0 7px; background: #000; color: #fff; clip-path: polygon(0 0, 100% 0, 86% 100%, 12% 100%); }

.command { display: flex; font: 12px/13px "Liberation Mono", "Noto Sans CJK SC", monospace; color: #111; }
.cmd-grip { width: 14px; padding: 2px; border-radius: 3px 0 0 3px; background: radial-gradient(circle at 1px 1px, #222 1px, transparent 1px) 0 0 / 3px 3px content-box, #9c9c9c; }
.cmd-grip { padding-bottom: 39px; }
.cmd-body { flex: 1; }
.log { height: 33px; padding-top: 2px; background: #c8c8c8; border-bottom: 1px solid #aaa; }
.entry { height: 15px; display: flex; align-items: center; padding: 2px 3px 0 0; background: #fff; }
.entry input { flex: 1; min-width: 0; height: 13px; padding: 0; border: 0; background: none; font: inherit; outline: 0; }
.copy { color: #777; font-family: "Noto Sans CJK SC", sans-serif; font-weight: 300; }

/* Status bar */
.status { height: 21px; display: flex; border-top: 1px solid #333; border-bottom: 2px solid #0b4a5e; background: linear-gradient(#8e8e8e, #6c6c6c); }
.coords { flex: 0 0 177px; padding-left: 9px; line-height: 20px; color: #111; }
.toggles { display: flex; background: #777; }
.toggles button { width: 18px; margin-right: 1px; display: grid; place-items: center; background: linear-gradient(#c8c8c8, #a4a4a4); }
.toggles button.on { background: linear-gradient(#d6f2f8, #8fc6d6); }
.toggles.end { margin-left: auto; }
.toggles .word { width: 26px; color: #000; }
.gap { width: 17px; background: #808080; }
.gap.slim { width: 5px; }
.toggles .scale { width: 44px; display: flex; align-items: center; justify-content: center; gap: 4px; }
.scale span { font: 11px/15px "Liberation Serif", serif; color: #000; }
.toggles .lamp { width: 21px; background: #686868; }
.toggles .more { width: 10px; }
.toggles .dim { opacity: .7; }
.size { align-self: flex-end; margin-left: 2px; stroke: #ddd; stroke-width: 2; }
```
